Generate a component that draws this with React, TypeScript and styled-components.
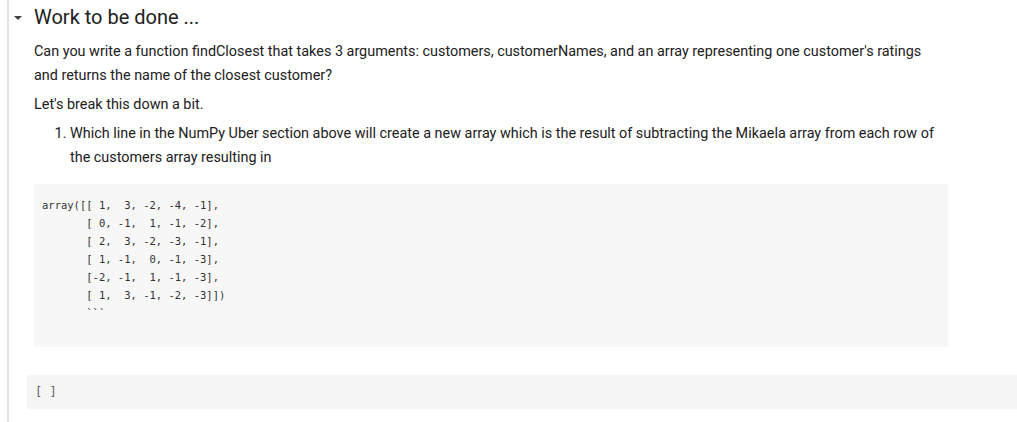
import styled, { createGlobalStyle } from 'styled-components'

const GlobalStyle = createGlobalStyle`
  html, body {
    margin: 0;
    padding: 0;
    background: #ffffff;
  }
  body {
    font-family: Roboto, "Noto Sans", Arial, sans-serif;
    color: #212121;
  }
`

const Section = styled.div`
  margin-left: 7px;
  border-left: 2px solid #e3e3e3;
  min-height: 422px;
  box-sizing: border-box;
`

const Header = styled.div`
  display: flex;
  align-items: center;
  height: 34px;
  padding-left: 5px;
`

const Caret = styled.span`
  width: 0;
  height: 0;
  border-left: 4.5px solid transparent;
  border-right: 4.5px solid transparent;
  border-top: 4.5px solid #424242;
  margin-right: 12px;
  margin-top: 1px;
`

const Title = styled.h2`
  margin: 0;
  font-size: 20px;
  font-weight: 400;
  color: #212121;
`

const Body = styled.div`
  padding-left: 25px;
  padding-top: 6px;
`

const Para = styled.p`
  margin: 0 0 5px 0;
  font-size: 14.4px;
  line-height: 24px;
  width: 900px;
`

const List = styled.ol`
  margin: 0;
  padding-left: 36px;
  font-size: 14.4px;
  line-height: 24px;
  width: 880px;
`

const Item = styled.li`
  padding-left: 0;
`

const CodeBlock = styled.pre`
  margin: 14px 0 0 0;
  width: 914px;
  box-sizing: border-box;
  background: #f7f7f7;
  padding: 12px 8px 25px 8px;
  font-family: "DejaVu Sans Mono", "Liberation Mono", monospace;
  font-size: 10.5px;
  color: #333333;
`

const CodeLine = styled.div`
  height: 18px;
  line-height: 18px;
`

const Cell = styled.div`
  margin-top: 28px;
  margin-left: 18px;
  height: 34px;
  background: #f5f5f5;
  display: flex;
  align-items: center;
  padding-left: 8px;
  font-family: "DejaVu Sans Mono", "Liberation Mono", monospace;
  font-size: 12px;
  color: #616161;
`

const codeLines = [
  'array([[ 1,  3, -2, -4, -1],',
  '       [ 0, -1,  1, -1, -2],',
  '       [ 2,  3, -2, -3, -1],',
  '       [ 1, -1,  0, -1, -3],',
  '       [-2, -1,  1, -1, -3],',
  '       [ 1,  3, -1, -2, -3]])',
  '       ```',
]

export default function App() {
  return (
    <>
      <GlobalStyle />
      <Section>
        <Header>
          <Caret />
          <Title>Work to be done ...</Title>
        </Header>
        <Body>
          <Para>
            Can you write a function findClosest that takes 3 arguments: customers, customerNames, and an array representing one customer's ratings and returns the name of the closest customer?
          </Para>
          <Para>Let's break this down a bit.</Para>
          <List>
            <Item>
              Which line in the NumPy Uber section above will create a new array which is the result of subtracting the Mikaela array from each row of the customers array resulting in
            </Item>
          </List>
          <CodeBlock>
            {codeLines.map((l, i) => (
              <CodeLine key={i}>{l}</CodeLine>
            ))}
          </CodeBlock>
        </Body>
        <Cell>[ ]</Cell>
      </Section>
    </>
  )
}
